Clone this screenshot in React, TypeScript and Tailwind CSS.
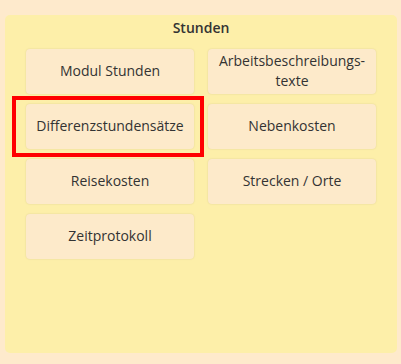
import React from "react";

const items = [
  "Modul Stunden",
  "Arbeitsbeschreibungs-texte",
  "Differenzstundensätze",
  "Nebenkosten",
  "Reisekosten",
  "Strecken / Orte",
  "Zeitprotokoll",
];

export default function App() {
  return (
    <div
      className="min-h-[364px] w-[401px] bg-[#feeacc] pt-[15px] pl-[5px]"
      style={{ fontFamily: '"Open Sans", sans-serif' }}
    >
      <div className="relative w-[392px] h-[338px] rounded-[5px] bg-[#fdefa9] pt-[3px]">
        <div className="text-center text-[14px] leading-[20px] font-semibold text-[#333]">
          Stunden
        </div>
        <div className="mt-[11px] px-[21px] grid grid-cols-[168px_168px] gap-x-[14px] gap-y-[10px]">
          {items.map((t) => (
            <div
              key={t}
              className="h-[45px] rounded-[4px] bg-[#fdeaca] shadow-[0_0_2px_rgba(0,0,0,0.12)] flex items-center justify-center text-center text-[14px] leading-[20px] text-[#333] px-2 pb-[2px]"
            >
              {t === "Arbeitsbeschreibungs-texte" ? (
                <span>
                  Arbeitsbeschreibungs-
                  <br />
                  texte
                </span>
              ) : (
                t
              )}
            </div>
          ))}
        </div>
        <div className="absolute left-[7px] top-[81px] w-[192px] h-[61px] border-4 border-[#ff0000]" />
      </div>
    </div>
  );
}
